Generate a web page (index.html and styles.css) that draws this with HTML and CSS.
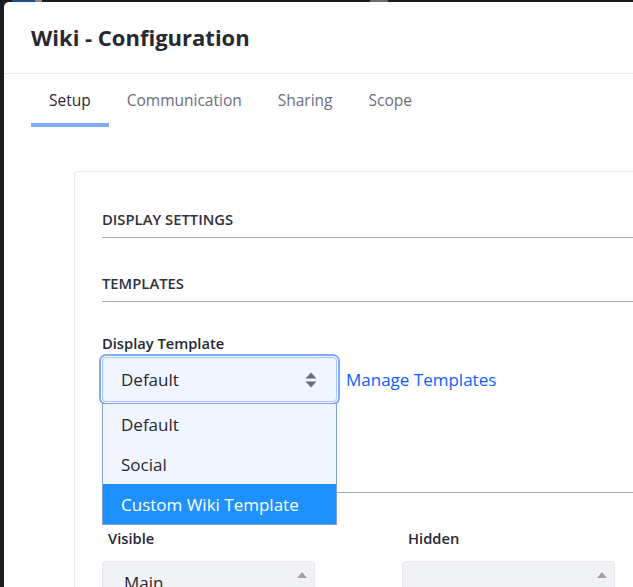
FILE: index.html
```html
<!DOCTYPE html>
<html lang="en">
<head>
<meta charset="utf-8">
<title>Wiki - Configuration</title>
<link rel="stylesheet" href="styles.css">
</head>
<body>
<div class="strip"><span class="bit-blue"></span><span class="bit-gray"></span><span class="bit-gray2"></span></div>
<div class="modal">
  <div class="modal-header">
    <h1 class="modal-title">Wiki - Configuration</h1>
  </div>
  <nav class="tabs">
    <a class="tab active">Setup</a>
    <a class="tab">Communication</a>
    <a class="tab">Sharing</a>
    <a class="tab">Scope</a>
  </nav>
  <div class="content">
    <div class="card">
      <div class="sheet-title">Display Settings</div>
      <div class="sheet-title templates">Templates</div>
      <label class="field-label">Display Template</label>
      <div class="select-row">
        <div class="select-wrap">
          <div class="select">
            <span>Default</span>
            <svg class="arrows" width="12" height="16" viewBox="0 0 12 16"><path d="M6 0.5 L11.5 6.5 L0.5 6.5 Z M6 15.5 L11.5 9.5 L0.5 9.5 Z" fill="#6b6c7e"/></svg>
          </div>
          <ul class="dropdown">
            <li>Default</li>
            <li>Social</li>
            <li class="selected">Custom Wiki Template</li>
          </ul>
        </div>
        <a class="link">Manage Templates</a>
      </div>
      <div class="divider"></div>
      <div class="columns">
        <div class="col">
          <div class="col-label">Visible</div>
          <div class="listbox"><span class="opt">Main</span><span class="scroll-up"></span></div>
        </div>
        <div class="col">
          <div class="col-label">Hidden</div>
          <div class="listbox"><span class="scroll-up"></span></div>
        </div>
      </div>
    </div>
  </div>
</div>
</body>
</html>
```
FILE: styles.css
```css
* { box-sizing: border-box; }
html, body { margin: 0; padding: 0; }
body {
  background: #1b1b22;
  width: 633px;
  height: 587px;
  overflow: hidden;
  font-family: "Open Sans", "Noto Sans", sans-serif;
  color: #272833;
}
.strip { height: 2px; display: flex; }
.bit-blue { margin-left: 12px; width: 23px; background: #1f4e8c; }
.bit-gray { width: 7px; background: #8a8a90; }
.bit-gray2 { margin-left: 328px; width: 18px; background: #6a6a70; }
.modal {
  margin-left: 4px;
  width: 720px;
  height: 585px;
  background: #fff;
  border-top-left-radius: 5px;
  overflow: hidden;
}
.modal-header {
  padding: 21px 27px;
  border-bottom: 1px solid #e7e7ed;
}
.modal-title {
  margin: 0;
  font-size: 22px;
  line-height: 29px;
  font-weight: 700;
  color: #272833;
}
.tabs { display: flex; padding-left: 27px; }
.tab {
  display: block;
  padding: 15px 18px 11px;
  line-height: 23px;
  font-size: 15.5px;
  color: #6b6c7e;
  border-bottom: 4px solid transparent;
}
.tab.active { color: #272833; border-bottom-color: #80acff; }
.content { padding: 44px 0 0 70px; }
.card {
  border: 1px solid #e7e7ed;
  border-top-left-radius: 4px;
  padding: 37px 0 60px 27px;
  background: #fff;
}
.sheet-title {
  font-size: 14.8px;
  line-height: 20px;
  font-weight: 600;
  color: #30313f;
  text-transform: uppercase;
  padding-bottom: 8px;
  border-bottom: 1px solid #a7a9bc;
  margin-bottom: 35px;
}
.sheet-title.templates { margin-bottom: 31px; }
.field-label {
  display: block;
  font-size: 14.7px;
  line-height: 20px;
  font-weight: 600;
  margin-bottom: 4px;
}
.select-row { display: flex; align-items: center; }
.select-wrap { position: relative; width: 235px; }
.select {
  height: 45px;
  display: flex;
  align-items: center;
  justify-content: space-between;
  padding: 0 19px 0 18px;
  font-size: 17px;
  color: #272833;
  background: #f0f5ff;
  border: 1px solid #a6c4ff;
  border-radius: 4px;
  box-shadow: 0 0 0 1px #fff, 0 0 0 3px #80acff;
}
.arrows { display: block; }
.link {
  margin-left: 9px;
  font-size: 17px;
  color: #0b5fff;
}
.dropdown {
  position: absolute;
  top: 46px;
  left: 0;
  width: 235px;
  margin: 0;
  padding: 0;
  list-style: none;
  background: #f0f5ff;
  border: 1px solid #7e9fd9;
  z-index: 5;
}
.dropdown li {
  height: 40px;
  line-height: 42px;
  padding-left: 18px;
  font-size: 17px;
  color: #272833;
}
.dropdown li.selected { background: #1e90ff; color: #fff; }
.divider {
  margin-top: 90px;
  border-top: 1px solid #a7a9bc;
}
.columns {
  display: grid;
  grid-template-columns: 300px 300px;
  padding-top: 35px;
}
.col-label {
  padding-left: 6px;
  font-size: 14.7px;
  line-height: 20px;
  font-weight: 600;
  margin-bottom: 13px;
}
.listbox {
  position: relative;
  width: 213px;
  height: 100px;
  background: #f1f2f5;
  border: 1px solid #e7e7ed;
  border-radius: 4px;
  padding: 9px 0 0 21px;
  font-size: 17px;
  color: #272833;
}
.scroll-up {
  position: absolute;
  top: 10px;
  right: 7px;
  width: 0;
  height: 0;
  border-left: 5px solid transparent;
  border-right: 5px solid transparent;
  border-bottom: 6px solid #a3a3a3;
}
```
